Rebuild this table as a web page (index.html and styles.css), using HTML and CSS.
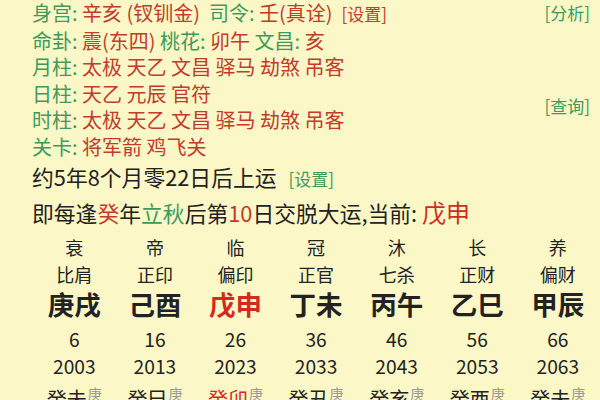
FILE: index.html
```html
<!DOCTYPE html>
<html lang="zh">
<head>
<meta charset="utf-8">
<link rel="stylesheet" href="styles.css">
</head>
<body>
<div class="page">
  <div class="top">
    <div class="info">
      <div class="row"><span class="lb">身宫:</span> <span class="v">辛亥 (钗钏金)</span>&nbsp; <span class="lb">司令:</span> <span class="v">壬(真诠)</span>&nbsp; <span class="v small">[设置]</span></div>
      <div class="row"><span class="lb">命卦:</span> <span class="v">震(东四)</span> <span class="lb">桃花:</span> <span class="v">卯午</span> <span class="lb">文昌:</span> <span class="v">亥</span></div>
      <div class="row"><span class="lb">月柱:</span> <span class="v">太极 天乙 文昌 驿马 劫煞 吊客</span></div>
      <div class="row"><span class="lb">日柱:</span> <span class="v">天乙 元辰 官符</span></div>
      <div class="row"><span class="lb">时柱:</span> <span class="v">太极 天乙 文昌 驿马 劫煞 吊客</span></div>
      <div class="row"><span class="lb">关卡:</span> <span class="v">将军箭 鸡飞关</span></div>
    </div>
    <div class="side">
      <span class="link">[分析]</span>
      <span class="link query">[查询]</span>
    </div>
  </div>
  <div class="line l1">约5年8个月零22日后上运<span class="link set">[设置]</span></div>
  <div class="line l2">即每逢<span class="r">癸</span>年<span class="g">立秋</span>后第<span class="r">10</span>日交脱大运,当前: <span class="cur">戊申</span></div>
  <div class="grid">
    <div class="col"><div class="c">衰</div><div class="c">比肩</div><div class="gz">庚戌</div><div class="c num">6</div><div class="c num">2003</div><div class="yr">癸未<sup>庚</sup></div></div>
    <div class="col"><div class="c">帝</div><div class="c">正印</div><div class="gz">己酉</div><div class="c num">16</div><div class="c num">2013</div><div class="yr">癸巳<sup>庚</sup></div></div>
    <div class="col"><div class="c">临</div><div class="c">偏印</div><div class="gz red">戊申</div><div class="c num">26</div><div class="c num">2023</div><div class="yr red">癸卯<sup>庚</sup></div></div>
    <div class="col"><div class="c">冠</div><div class="c">正官</div><div class="gz">丁未</div><div class="c num">36</div><div class="c num">2033</div><div class="yr">癸丑<sup>庚</sup></div></div>
    <div class="col"><div class="c">沐</div><div class="c">七杀</div><div class="gz">丙午</div><div class="c num">46</div><div class="c num">2043</div><div class="yr">癸亥<sup>庚</sup></div></div>
    <div class="col"><div class="c">长</div><div class="c">正财</div><div class="gz">乙巳</div><div class="c num">56</div><div class="c num">2053</div><div class="yr">癸酉<sup>庚</sup></div></div>
    <div class="col"><div class="c">养</div><div class="c">偏财</div><div class="gz">甲辰</div><div class="c num">66</div><div class="c num">2063</div><div class="yr">癸未<sup>庚</sup></div></div>
  </div>
</div>
</body>
</html>
```
FILE: styles.css
```css
html, body {
  margin: 0;
  padding: 0;
  background: #fcf7c6;
}
body {
  width: 600px;
  height: 400px;
  overflow: hidden;
  font-family: "Noto Sans CJK SC", "Noto Sans", sans-serif;
  color: #222;
}
.page {
  padding: 0 10px 0 32px;
}
.top {
  display: flex;
  justify-content: space-between;
}
.row {
  font-size: 20px;
  line-height: 26.5px;
  white-space: nowrap;
}
.lb { color: #3c9a5c; }
.v { color: #c23b2c; }
.small { font-size: 17px; }
.side {
  display: flex;
  flex-direction: column;
  align-items: flex-end;
  line-height: 26.5px;
}
.link { color: #3c9a5c; font-size: 17px; }
.query { margin-top: 66px; }
.line {
  font-size: 21.8px;
  white-space: nowrap;
}
.set { margin-left: 12px; }
.l1 { line-height: 34px; }
.l2 { line-height: 32px; }
.r { color: #c23b2c; }
.g { color: #3c9a5c; }
.cur { color: #d42a1e; font-size: 24px; }
.grid {
  display: grid;
  grid-template-columns: repeat(7, 80.6px);
  margin-left: 2px;
  margin-top: 5px;
}
.col {
  display: flex;
  flex-direction: column;
  align-items: center;
}
.c {
  font-size: 18px;
  line-height: 26.5px;
}
.gz {
  font-size: 26.5px;
  font-weight: bold;
  line-height: 34px;
  margin-bottom: 5px;
}
.num { font-size: 19.2px; }
.red { color: #d42a1e; }
.yr {
  font-size: 20px;
  line-height: 28px;
  margin-top: 0;
  white-space: nowrap;
}
.yr sup {
  font-size: 14px;
  color: #999;
  vertical-align: 8px;
  margin-left: 1px;
}
```
